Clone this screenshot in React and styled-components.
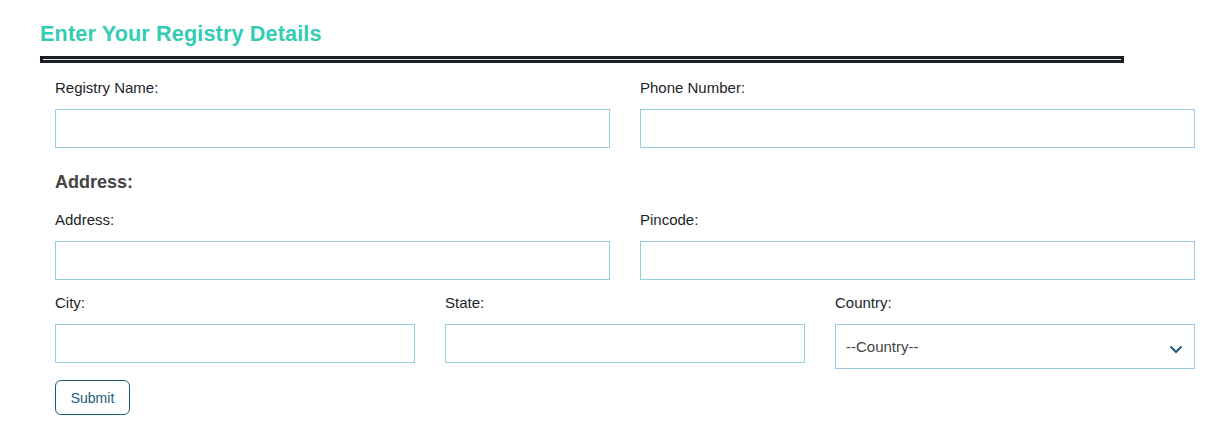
import React from "react";
import styled, { createGlobalStyle } from "styled-components";

const GlobalStyle = createGlobalStyle`
  * {
    box-sizing: border-box;
  }
  body {
    margin: 0;
    background: #fff;
    font-family: "Liberation Sans", Arial, sans-serif;
  }
`;

const Page = styled.div`
  padding: 22px 32px 0 40px;
`;

const Title = styled.h1`
  margin: 0 0 10px;
  font-size: 21.6px;
  line-height: 24px;
  font-weight: 700;
  letter-spacing: 0.15px;
  color: #33ccb4;
`;

const Rule = styled.div`
  width: 1084px;
  height: 7px;
  border: 3px solid #1b1f24;
  background: #dce9ee;
`;

const Form = styled.form`
  padding: 15px 0 0 15px;
  display: flex;
  flex-direction: column;
  align-items: flex-start;
`;

const Row = styled.div`
  width: 100%;
  display: grid;
  grid-template-columns: repeat(${(p) => p.cols}, 1fr);
  column-gap: 30px;
  margin-bottom: ${(p) => p.gap ?? 13}px;
`;

const Field = styled.div`
  display: flex;
  flex-direction: column;
`;

const Label = styled.label`
  display: block;
  font-size: 15px;
  line-height: 20px;
  color: #212529;
  margin-bottom: 11px;
`;

const Input = styled.input`
  height: 39px;
  border: 1px solid #96cde0;
  padding: 0 10px;
  font: inherit;
  font-size: 15px;
  outline: none;
`;

const SectionTitle = styled.h3`
  margin: 10px 0 16px;
  font-size: 18px;
  line-height: 24px;
  font-weight: 700;
  color: #444;
`;

const SelectBox = styled.div`
  position: relative;
  height: 45px;
`;

const Select = styled.select`
  appearance: none;
  width: 100%;
  height: 45px;
  border: 1px solid #96cde0;
  background: #fff;
  padding: 0 10px;
  font-family: inherit;
  font-size: 15px;
  color: #444;
  outline: none;
`;

const Chevron = styled.svg`
  position: absolute;
  right: 12px;
  top: 21px;
  pointer-events: none;
`;

const Submit = styled.button`
  width: 75px;
  height: 35px;
  border: 1px solid #1d5d7b;
  border-radius: 6px;
  background: #fff;
  color: #1d5d7b;
  font-family: inherit;
  font-size: 14px;
  cursor: pointer;
`;

const TextField = ({ label }) => (
  <Field>
    <Label>{label}</Label>
    <Input type="text" />
  </Field>
);

const App = () => {
  return (
    <Page>
      <GlobalStyle />
      <Title>Enter Your Registry Details</Title>
      <Rule />
      <Form onSubmit={(e) => e.preventDefault()}>
        <Row cols={2} gap={12}>
          <TextField label="Registry Name:" />
          <TextField label="Phone Number:" />
        </Row>
        <SectionTitle>Address:</SectionTitle>
        <Row cols={2}>
          <TextField label="Address:" />
          <TextField label="Pincode:" />
        </Row>
        <Row cols={3} gap={11}>
          <TextField label="City:" />
          <TextField label="State:" />
          <Field>
            <Label>Country:</Label>
            <SelectBox>
              <Select defaultValue="">
                <option value="">--Country--</option>
              </Select>
              <Chevron width="14" height="9" viewBox="0 0 14 9">
                <path d="M1.5 1.5 L7 7 L12.5 1.5" fill="none" stroke="#1d5d7b" strokeWidth="2" />
              </Chevron>
            </SelectBox>
          </Field>
        </Row>
        <Submit type="submit">Submit</Submit>
      </Form>
    </Page>
  );
};

export default App;
